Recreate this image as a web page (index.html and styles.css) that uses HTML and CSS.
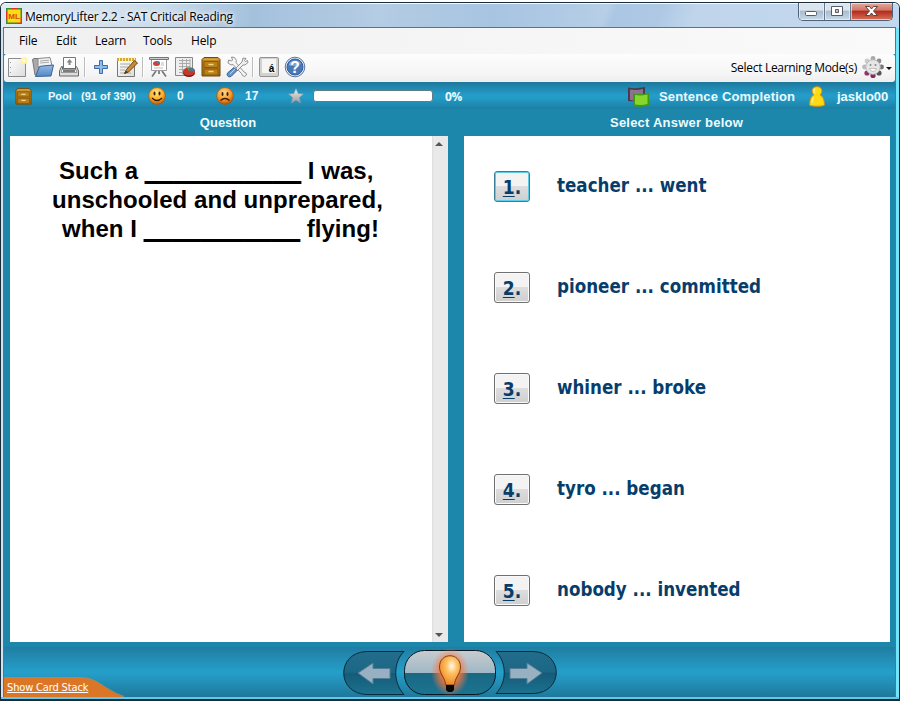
FILE: index.html
```html
<!DOCTYPE html>
<html lang="en">
<head>
<meta charset="utf-8">
<title>MemoryLifter 2.2 - SAT Critical Reading</title>
<link rel="stylesheet" href="styles.css">
</head>
<body>
<svg class="defs" width="0" height="0" aria-hidden="true">
  <defs>
    <linearGradient id="paper" x2="1" y2="1"><stop stop-color="#fff"/><stop offset="1" stop-color="#dcdcdc"/></linearGradient>
    <linearGradient id="blue" y2="1" x2="0"><stop stop-color="#94bbe6"/><stop offset="1" stop-color="#5585c3"/></linearGradient>
    <linearGradient id="wood" y2="1" x2="0"><stop stop-color="#c58b20"/><stop offset="1" stop-color="#a06a0c"/></linearGradient>
    <linearGradient id="silver" y2="1" x2="0"><stop stop-color="#f2f2f2"/><stop offset="1" stop-color="#999"/></linearGradient>
    <radialGradient id="happy" cx=".45" cy=".3" r=".7"><stop stop-color="#ffe884"/><stop offset=".6" stop-color="#fbae27"/><stop offset="1" stop-color="#c25a06"/></radialGradient>
    <radialGradient id="sad" cx=".45" cy=".3" r=".7"><stop stop-color="#ffd88a"/><stop offset=".6" stop-color="#f49a2e"/><stop offset="1" stop-color="#b94c08"/></radialGradient>
    <symbol id="cabinet" viewBox="0 0 22 22">
      <path d="M4 1.500h14l2 2v16.500h-18v-16.500z" fill="url(#wood)" stroke="#70480a"/>
      <path d="M4.500 2.500h13l1 1.500h-15z" fill="#d3a544"/>
      <path d="M4 5.500h14v6h-14zM4 13h14v6h-14z" fill="#bb8119" stroke="#8b5a0a"/>
      <path d="M8.500 8.500h5M8.500 15.500h5" stroke="#f5d78c" stroke-width="1.500"/>
    </symbol>
  </defs>
</svg>
<div class="window">
  <header class="titlebar">
    <svg class="app-icon" width="16" height="16" viewBox="0 0 16 16"><path fill="#3d8b32" d="M0 0h16v16H0z"/><path fill="#d9332a" d="M0 3h2v9H0zM5 0h7v2H5zM14 9h2v7h-5v-2h3z"/><path fill="#ffdc12" d="M1.500 1.500h13v13h-13z"/><text x="8" y="10.500" text-anchor="middle" class="logo-text">ML</text></svg>
    <h1 class="title">MemoryLifter 2.2 - SAT Critical Reading</h1>
    <div class="controls">
      <span class="ctl min"><svg width="26" height="16" viewBox="0 0 26 16"><rect x="6.500" y="8.500" width="11" height="4" rx="1" fill="#fff" stroke="#555c68"/></svg></span>
      <span class="ctl max"><svg width="26" height="16" viewBox="0 0 26 16"><path d="M6.500 3.500h11v9h-11zM10.500 6.500v3h3v-3z" fill="#fff" fill-rule="evenodd" stroke="#555c68"/></svg></span>
      <span class="ctl close"><svg width="42" height="16" viewBox="0 0 42 16"><path d="M14.500 3.500h4l2 2.500 2-2.500h4l-4 4.500 4 4.500h-4l-2-2.500-2 2.500h-4l4-4.500z" fill="#fff" stroke="#64413f"/></svg></span>
    </div>
  </header>
  <main class="client">
    <nav class="menu"><span class="m-file">File</span><span class="m-edit">Edit</span><span class="m-learn">Learn</span><span class="m-tools">Tools</span><span class="m-help">Help</span></nav>
    <div class="toolbar">
      <svg class="ico" viewBox="0 0 22 22"><path d="M2.500 2.500h17v18h-17z" fill="url(#paper)" stroke="#8b8b8b"/><path d="M4.500 6v1M4.500 11v1M4.500 16v1" stroke="#999"/><circle cx="18" cy="4.500" r="3.500" fill="#fff4a0"/><circle cx="18" cy="4.500" r="1.600" fill="#fffbe0"/></svg>
      <svg class="ico" viewBox="0 0 22 22"><path d="M.5 3.500l1.500-1h5l1 2v13l-3 1.500h-2z" fill="#aaa" stroke="#777"/><path d="M6 2.500l12-1 2 8-14 2z" fill="#f2f2f2" stroke="#888"/><path d="M8 5l9-.8M8 7l9-.8" stroke="#aaa"/><path d="M7.500 10.500l3-.5 11-1-2.500 11-15.500.5z" fill="url(#blue)" stroke="#3a6499"/></svg>
      <svg class="ico" viewBox="0 0 22 22"><path d="M5.500 1.500h12v11h-12z" fill="#fff" stroke="#777"/><path d="M11.500 3l3 3.500h-2V9h-2V6.500h-2z" fill="#888"/><path d="M4.500 10.500h-1l-2 4.500v5h19v-5l-2-4.500h-1v2.500h-13z" fill="#ddd" stroke="#666"/><path d="M4 13.500h14l1 3H3z" fill="#f6f6f6" stroke="#999"/><path d="M5 15h12" stroke="#555" stroke-width="1.500"/></svg>
      <i class="sep"></i>
      <svg class="ico" viewBox="0 0 22 22"><path d="M9.500 4.500h3v5h5v3h-5v5h-3v-5h-5v-3h5z" fill="#8fbbe8" stroke="#3c6ba7"/></svg>
      <svg class="ico" viewBox="0 0 22 22"><path d="M1.500 3.500h17v17h-17z" fill="url(#paper)" stroke="#777"/><path d="M1 2h19v3H1z" fill="#d7a72e"/><path d="M3.500 1v4M6.500 1v4M9.500 1v4M12.500 1v4M15.500 1v4M18.500 1v4" stroke="#fff1a2"/><path d="M4 8h10M4 11h8M4 14h5M4 17h11" stroke="#aaa"/><path d="M8.500 17.500l2-4 8-9 3 2.500-9 9z" fill="#c98c30" stroke="#654316"/><path d="M8 18l2-3 2 1z" fill="#333"/></svg>
      <i class="sep"></i>
      <svg class="ico" viewBox="0 0 22 22"><path d="M8 15l-4 5.500M14 15l4 5.500M11 14v4" stroke="#777" stroke-width="1.700"/><path d="M3.500 3.500h15v11h-15z" fill="#fff" stroke="#999"/><path d="M1.500 1.500h19v2h-19z" fill="#ccc" stroke="#777"/><ellipse cx="8.500" cy="7.500" rx="3.500" ry="2.500" fill="#d73b31"/><path d="M8.500 7.500V5c3 0 4 1 3.500 2.500z" fill="#557aa5"/><path d="M13 7h3M13 9h3M6 12h9" stroke="#bbb"/></svg>
      <svg class="ico" viewBox="0 0 22 22"><path d="M1.500 1.500h17v18h-17z" fill="#eee" stroke="#888"/><path d="M5 4.500h11M5 7.500h11M5 10.500h11M5 13.500h8M5 16.500h5M8.500 3v15M12.500 3v11M16 3v8" stroke="#aaa"/><ellipse cx="15" cy="17" rx="6" ry="4" fill="#741b18"/><ellipse cx="15" cy="15.500" rx="6" ry="4" fill="#c7372b"/><path d="M15 15.500v-4c5 0 6 2 6 4z" fill="#4e7591"/><path d="M15 15.500l-2-4h2z" fill="#65a049"/></svg>
      <svg class="ico" viewBox="0 0 22 22"><use href="#cabinet"/></svg>
      <svg class="ico" viewBox="0 0 22 22"><path d="M2.500 4l3 1 1-1-1-3 3 .5 2 3-.5 2 8 9.500 2 1 .5 2-2 1.500-2-1-1-2L7 8.500l-2 .5-3-2z" fill="#f4f4f4" stroke="#777" stroke-width=".8"/><path d="M10 12l6-6 1-4 3 .5-1.500 2 1 1 2-1 .500 2-3 2.500-2 0-6 6z" fill="#eee" stroke="#777" stroke-width=".8"/><path d="M8 11.500l3 3-6 6c-3 1-4.500-1-3.500-3.500z" fill="#6796cf" stroke="#315989"/><path d="M4 18l5-5" stroke="#b5d3f3"/></svg>
      <i class="sep"></i>
      <svg class="ico" viewBox="0 0 22 22"><rect x="1.500" y="1.500" width="19" height="19" rx="1.500" fill="#d2d2d0" stroke="#929292"/><rect x="4" y="3" width="14" height="14" rx="1" fill="#f5f5f3"/><text x="13.500" y="16" text-anchor="middle" class="key-text">á</text></svg>
      <svg class="ico" viewBox="0 0 22 22"><circle cx="11" cy="11" r="9.800" fill="#e9eff7" stroke="#5876a0"/><circle cx="11" cy="11" r="8" fill="#4978b8" stroke="#305c9a"/><path d="M5 7.500c2-4 10-4 12 0-4 3-8 3-12 2z" fill="#7da2d5"/><text x="11" y="17" text-anchor="middle" class="help-text">?</text></svg>
      <span class="mode-label">Select Learning Mode(s)</span>
      <svg class="gear" width="24" height="24" viewBox="0 0 24 24"><circle cx="12" cy="3.500" r="2.400" fill="#aaa"/><circle cx="6" cy="6" r="2.400" fill="#ccc"/><circle cx="3.500" cy="12" r="2.400" fill="#bbb"/><circle cx="18" cy="6" r="2.400" fill="#8d8d8d"/><circle cx="20.500" cy="12" r="2.400" fill="#777"/><circle cx="18" cy="18" r="2.600" fill="#555"/><circle cx="6" cy="18" r="2.600" fill="#96316b"/><circle cx="12" cy="20.500" r="2.600" fill="#86265c"/><circle cx="12" cy="12" r="7.300" fill="#e6e6e6" stroke="#b5b5b5"/><circle cx="9.500" cy="10" r="1" fill="#888"/><circle cx="14.500" cy="10" r="1" fill="#888"/><path d="M8.500 13.500h7q-1 3-3.500 3t-3.500-3z" fill="#fff" stroke="#aaa" stroke-width=".7"/></svg>
      <i class="arrow"></i>
    </div>
    <section class="status">
      <svg class="s-cab" width="17" height="17" viewBox="1 1 20 20"><use href="#cabinet" width="22" height="22"/></svg>
      <span class="pool">Pool</span><span class="count">(91 of 390)</span>
      <svg class="s-happy" width="18" height="18" viewBox="0 0 18 18"><circle cx="9" cy="9" r="8.400" fill="url(#happy)" stroke="#a75508" stroke-width=".7"/><ellipse cx="6.500" cy="6.500" rx="1" ry="2" fill="#3b1a02"/><ellipse cx="11.500" cy="6.500" rx="1" ry="2" fill="#3b1a02"/><path d="M4 11q5 5 10 0" fill="none" stroke="#3b1a02" stroke-width="1.400"/></svg>
      <span class="right">0</span>
      <svg class="s-sad" width="18" height="18" viewBox="0 0 18 18"><circle cx="9" cy="9" r="8.400" fill="url(#sad)" stroke="#a75508" stroke-width=".7"/><ellipse cx="6.500" cy="7" rx="1" ry="1.900" fill="#3b1a02"/><ellipse cx="11.500" cy="7" rx="1" ry="1.900" fill="#3b1a02"/><path d="M4.500 13.500q4.500-4 9 0" fill="none" stroke="#3b1a02" stroke-width="1.300"/></svg>
      <span class="wrong">17</span>
      <svg class="s-star" width="16" height="16" viewBox="0 0 16 16"><path d="M8 .5l2.200 5 5.300.5-4 3.600 1.200 5.600L8 12.300l-4.700 2.900 1.200-5.600L.5 6l5.300-.5z" fill="url(#silver)" stroke="#7699a6" stroke-width=".6"/></svg>
      <span class="progress"></span><span class="percent">0%</span>
      <svg class="s-stack" width="23" height="21" viewBox="0 0 23 21"><path d="M1 1.500q8 1.500 17-.5v13q-9 2-17 1z" fill="#4a3b4c"/><path d="M3 3.500q7 1 13-.5v10q-7 2-13 1z" fill="#8c7390"/><path d="M6 7.500q8 1.500 16-1v13q-8 2-16 .5z" fill="#429811"/><path d="M8 9q6 1 12.500-.5v9.500q-6 1.500-12.500.5z" fill="#85d82b"/></svg>
      <span class="chapter">Sentence Completion</span>
      <svg class="s-user" width="16" height="21" viewBox="0 0 16 21"><path d="M8 .7c5 0 6 4.500 3.700 7.500l-.4 1c3 1 4.200 6 4 10-2 1.300-12.600 1.300-14.600 0-.2-4 1-9 4-10l-.4-1C2 5.200 3 .7 8 .7z" fill="#ffd816" stroke="#d89405"/><path d="M6 2.500q-2 2.500 0 4.500M4.500 11.500Q3 14 3 17" fill="none" stroke="#fff07c" stroke-width="1.600"/></svg>
      <span class="user">jasklo00</span>
    </section>
    <div class="work">
      <section class="pane question-pane">
        <h2>Question</h2>
        <div class="sheet question-sheet">
          <p class="question"><span class="q1">Such a <b class="blank">___________</b> I was,</span><span class="q2">unschooled and unprepared,</span><span class="q3">when I <b class="blank">___________</b> flying!</span></p>
          <div class="scroll"><i class="up"></i><i class="down"></i></div>
        </div>
      </section>
      <section class="pane answer-pane">
        <h2>Select Answer below</h2>
        <div class="sheet answers">
          <div class="answer"><button class="num focused"><u>1</u>.</button><span>teacher ... went</span></div>
          <div class="answer"><button class="num"><u>2</u>.</button><span>pioneer ... committed</span></div>
          <div class="answer"><button class="num"><u>3</u>.</button><span>whiner ... broke</span></div>
          <div class="answer"><button class="num"><u>4</u>.</button><span>tyro ... began</span></div>
          <div class="answer"><button class="num"><u>5</u>.</button><span>nobody ... invented</span></div>
        </div>
      </section>
    </div>
    <footer class="footer">
      <div class="stack-tab"><svg width="121" height="20" viewBox="0 0 121 20"><path d="M0 .5h76c18 0 22 11 44 19.500H0z" fill="#dc7627"/><path d="M0 .5h76c18 0 22 11 44 19" fill="none" stroke="#a58a62"/></svg><a>Show Card Stack</a></div>
      <svg class="nav-buttons" width="216" height="50" viewBox="0 0 216 50">
        <defs>
          <linearGradient id="dark" x2="0" y2="1"><stop stop-color="#216d8b"/><stop offset=".48" stop-color="#1c6785"/><stop offset=".52" stop-color="#155b79"/><stop offset="1" stop-color="#1b728f"/></linearGradient>
          <linearGradient id="glass" x2="0" y2="1"><stop stop-color="#c8cccf"/><stop offset=".51" stop-color="#9fb8c6"/><stop offset=".52" stop-color="#196884"/><stop offset="1" stop-color="#1c7490"/></linearGradient>
          <radialGradient id="halo"><stop stop-color="#ff6a19"/><stop offset=".5" stop-color="#ff7438" stop-opacity=".85"/><stop offset="1" stop-color="#ff7a48" stop-opacity="0"/></radialGradient>
          <radialGradient id="bulb" cx=".58" cy=".35" r=".65"><stop stop-color="#fffbe8"/><stop offset=".4" stop-color="#ffc064"/><stop offset="1" stop-color="#ee871d"/></radialGradient>
        </defs>
        <path d="M62 4.500H25C-6 5-6 47 25 47.500H62C51 36 51 15 62 4.500z" fill="url(#dark)" stroke="#092c3b"/>
        <path d="M154 4.500h37c31 .5 31 41.500 0 42h-37c11-11 11-31 0-42z" fill="url(#dark)" stroke="#092c3b"/>
        <rect x="62.500" y="3.500" width="91" height="44" rx="20" fill="url(#glass)" stroke="#061922"/>
        <path d="M16 26l15-10v5.500h17v10H31V37zM200 26l-15-10v5.500h-17v10h17V37z" fill="#98b1c2" stroke="#527d94"/>
        <ellipse cx="108" cy="25" rx="19" ry="24" fill="url(#halo)"/>
        <path d="M103.500 38c0-7-6-11-6-18 0-15 21-15 21 0 0 7-6 11-6 18z" fill="url(#bulb)" stroke="#75431b"/>
        <path d="M104 38h8v5l-2 2h-4l-2-2z" fill="#080808"/>
      </svg>
    </footer>
  </main>
</div>
</body>
</html>
```
FILE: styles.css
```css
* { box-sizing: border-box; }
body { margin: 0; width: 900px; height: 701px; overflow: hidden; background: #fff; font-family: "Liberation Sans", sans-serif; }
.defs { position: absolute; }
svg { display: block; flex: none; overflow: visible; }
h1, h2, p { margin: 0; }
span { white-space: nowrap; }
.window { width: 900px; height: 699px; margin-top: 2px; border: 1px solid #182c3a; border-bottom-width: 2px; border-radius: 6px 6px 0 0; padding: 0 3px 0 2px; background: linear-gradient(90deg, #d4e2ef 0 2px, #71e4fa 897px); box-shadow: inset 0 -2px #62c8e9; }
.titlebar { display: flex; height: 25px; margin: 0 -3px 0 -2px; padding: 5px 6px 0 5px; border-top: 1px solid #f4f9fd; border-radius: 5px 5px 0 0; background: linear-gradient(112deg, transparent 0 67%, #a1bfdf88 68% 73%, transparent 77%), linear-gradient(90deg, #e1eaf2, #cbdcea 18%, #a4c1dc 28%, #b4cce4 42%, #a7c4e1 55%, #c0d5eb 75%, #c2d8ef); }
.app-icon { margin-top: -1px; }
.logo-text { font: bold 8px "Liberation Sans", sans-serif; fill: #d64a12; }
.title { margin: -1px 0 0 3px; font: 400 12px/17px "Open Sans", sans-serif; letter-spacing: -.22px; white-space: nowrap; text-shadow: 0 0 5px #fff, 0 0 5px #fff; }
.controls { display: flex; width: 95px; height: 18px; margin: -6px 0 0 auto; border: 1px solid #50617a; border-top: 0; border-radius: 0 0 5px 5px; overflow: hidden; }
.ctl { border-right: 1px solid #66778d; background: linear-gradient(#dce5ee 0 42%, #a9bbcd 47%, #c8d9e7); box-shadow: inset 0 0 0 1px #edf4faaa; }
.ctl.min, .ctl.max { width: 26px; }
.close { flex: 1; border: 0; background: linear-gradient(#e4aa9b, #cf7767 42%, #b3291c 48%, #d77358); }
.client { display: flex; flex-direction: column; height: 670px; margin-top: -1px; border: 1px solid #61717e; border-bottom: 0; background: #1c87ab; }
.menu { display: flex; height: 26px; padding: 4px 0 0 15px; background: linear-gradient(90deg, #f0f0f0, #fafafa); font: 12px/17px "Open Sans", sans-serif; letter-spacing: -.15px; }
.menu span { flex: none; }
.m-file { width: 37px; } .m-edit { width: 39px; } .m-learn { width: 48px; } .m-tools { width: 48px; }
.toolbar { display: flex; gap: 4px; height: 29px; padding: 2px 0 0 2px; background: linear-gradient(#fdfdfd, #f6f6f6 65%, #eee); border-radius: 3px; }
.ico { width: 22px; height: 22px; }
.sep { width: 2px; height: 20px; margin-top: 1px; border-left: 1px solid #bdbdbd; border-right: 1px solid #fff; }
.key-text { font: bold 10px "Liberation Sans", sans-serif; }
.help-text { font: bold 16px "Liberation Sans", sans-serif; fill: #fff; }
.mode-label { margin: 3px 0 0 auto; font: 12px/17px "Open Sans", sans-serif; letter-spacing: -.3px; }
.gear { margin-top: -1px; }
.arrow { width: 0; height: 0; margin: 11px 3px 0 -3px; border: 3px solid transparent; border-top-color: #111; border-bottom: 0; }
.status { display: flex; align-items: center; height: 27px; padding: 1px 0 0 11px; background: linear-gradient(#1e789b, #249cc9 48%, #239cc8 58%, #1b7fa3); color: #eefafc; font-size: 12px; font-weight: bold; }
.status > * { flex: none; }
.pool { width: 33px; margin-left: 16px; font-size: 11px; }
.count { width: 67px; font-size: 11px; letter-spacing: .02px; }
.right { width: 39px; margin-left: 11px; }
.wrong { width: 43px; margin-left: 11px; font-size: 12px; }
.progress { width: 120px; height: 12px; margin-left: 9px; border: 1px solid #5d7e89; border-radius: 3px; background: #fff; }
.percent { width: 182px; margin-left: 12px; font-family: "Open Sans", sans-serif; font-size: 12px; letter-spacing: -.3px; }
.chapter { width: 137px; margin-left: 9px; font-size: 13px; letter-spacing: .17px; }
.s-user { margin-left: 13px; }
.user { margin-left: 12px; font-size: 13px; }
.work { display: grid; grid-template-columns: 438px 426px; column-gap: 16px; padding-left: 6px; }
.pane { height: 533px; }
h2 { height: 27px; padding-right: 2px; color: #effcff; font: bold 13px/27px "Liberation Sans", sans-serif; text-align: center; }
.answer-pane h2 { padding-right: 1px; letter-spacing: .22px; }
.sheet { height: 506px; background: #fff; }
.question-sheet { display: grid; grid-template-columns: 1fr 16px; }
.question { display: flex; flex-direction: column; padding: 20px 0 0 42px; font: bold 24px/29px "Liberation Sans", sans-serif; letter-spacing: .06px; }
.question span { width: max-content; }
.q1 { margin-left: 7px; } .q3 { margin-left: 10px; }
.blank { letter-spacing: .85px; text-shadow: 1px 0 #000, 0 1px #000, 1px 1px #000, 0 2px #000, 1px 2px #000; }
.scroll { display: flex; flex-direction: column; justify-content: space-between; align-items: center; padding: 6px 2px 5px 0; background: linear-gradient(90deg, #ddd, #e9e9e9 2px); }
.up, .down { border: 4px solid transparent; border-top: 0; border-bottom-color: #555; }
.down { border-top: 4px solid #555; border-bottom: 0; }
.answers { padding: 35px 0 0 30px; }
.answer { display: flex; height: 101px; color: #073d6b; font: bold 18.6px/30px "DejaVu Sans Condensed", sans-serif; }
.num { width: 36px; height: 31px; margin: 0 27px 0 0; padding: 0; border: 1px solid #707070; border-radius: 3px; background: linear-gradient(#f3f3f3 0 48%, #ddd 50%, #cfcfcf); box-shadow: inset 0 0 0 1px #fafafa; color: #073d6b; font: bold 19px/26px "DejaVu Sans Condensed", sans-serif; }
.num u { text-decoration-thickness: 1px; text-underline-offset: 2px; }
.focused { border-color: #397d99; box-shadow: inset 0 0 0 1px #5dcce7; }
.footer { display: flex; height: 50px; margin-top: 5px; background: linear-gradient(#207da2, #259fca 51%, #1e789b); }
.stack-tab { position: relative; width: 121px; height: 20px; margin-top: 30px; }
.stack-tab a { position: absolute; left: 3px; top: 3px; color: #fff; font: 11px/15px "DejaVu Sans Condensed", sans-serif; letter-spacing: -.15px; text-decoration: underline; white-space: nowrap; }
.nav-buttons { margin-left: 217px; }
```
